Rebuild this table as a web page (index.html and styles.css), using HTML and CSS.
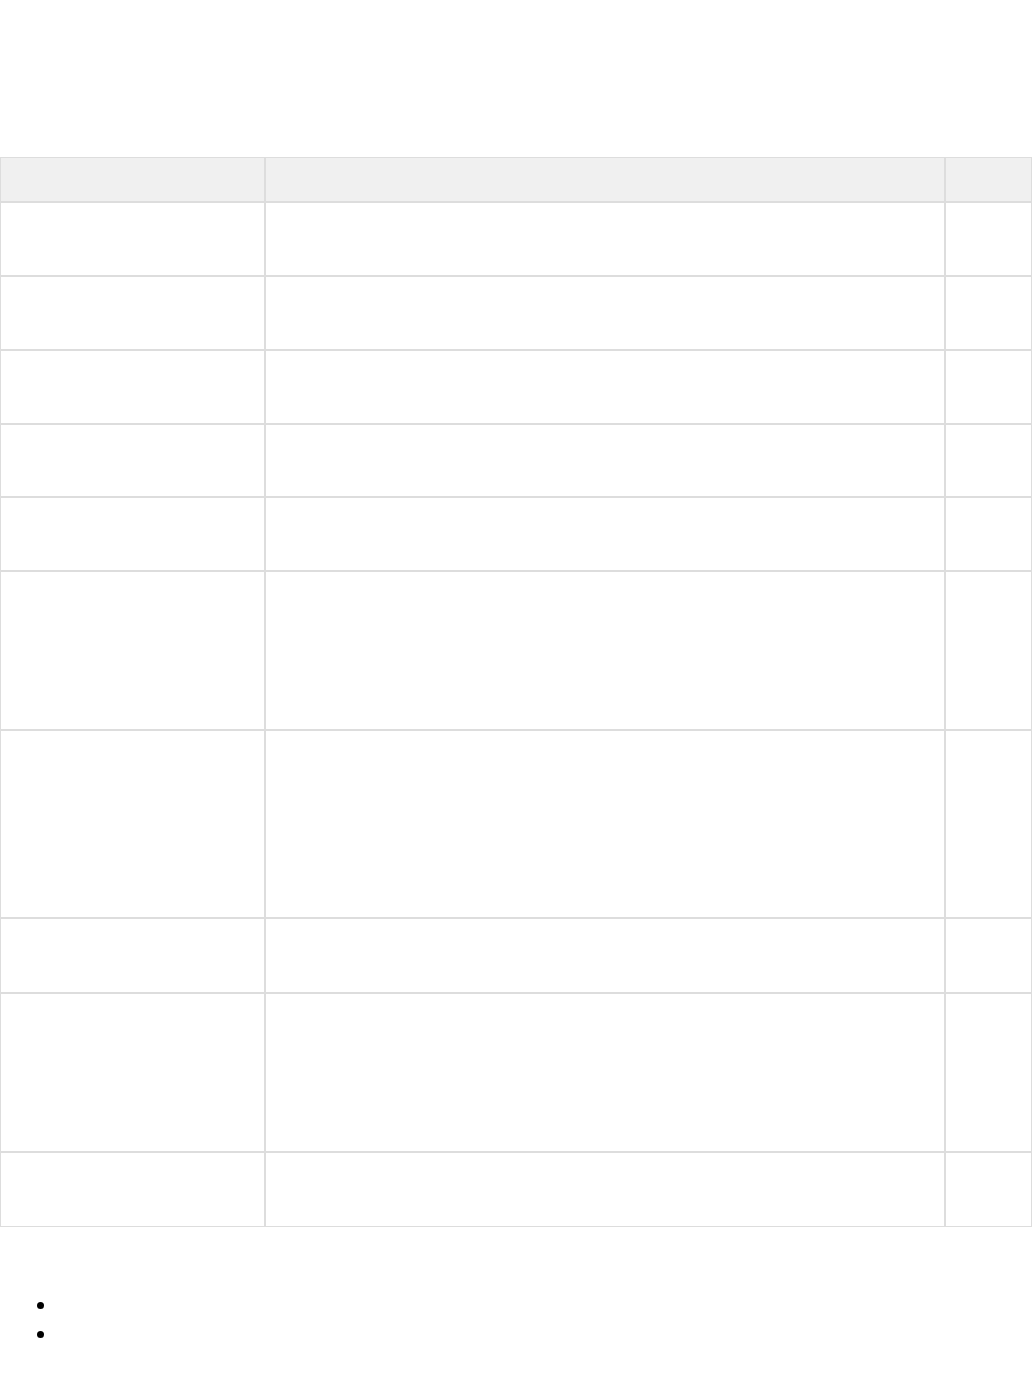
FILE: index.html
```html
<!DOCTYPE html>
<html>
<head>
<meta charset="utf-8">
<link rel="stylesheet" href="styles.css">
</head>
<body>
<div class="page">
  <table class="grid">
    <colgroup>
      <col class="c1"><col class="c2"><col class="c3">
    </colgroup>
    <thead>
      <tr class="h-head"><th></th><th></th><th></th></tr>
    </thead>
    <tbody>
      <tr class="h74"><td></td><td></td><td></td></tr>
      <tr class="h74"><td></td><td></td><td></td></tr>
      <tr class="h74"><td></td><td></td><td></td></tr>
      <tr class="h73"><td></td><td></td><td></td></tr>
      <tr class="h74"><td></td><td></td><td></td></tr>
      <tr class="h159"><td></td><td></td><td></td></tr>
      <tr class="h188"><td></td><td></td><td></td></tr>
      <tr class="h75"><td></td><td></td><td></td></tr>
      <tr class="h159"><td></td><td></td><td></td></tr>
      <tr class="h75"><td></td><td></td><td></td></tr>
    </tbody>
  </table>
  <ul class="notes">
    <li>&nbsp;</li>
    <li>&nbsp;</li>
  </ul>
</div>
</body>
</html>
```

FILE: styles.css
```css
html, body {
  margin: 0;
  padding: 0;
  background: #ffffff;
}
body {
  font-family: "Open Sans", "Liberation Sans", Arial, sans-serif;
  font-size: 18px;
  color: #000;
}
.page {
  padding-top: 157px;
}
.grid {
  width: 1032px;
  border-collapse: separate;
  border-spacing: 0;
  table-layout: fixed;
}
.c1 { width: 265px; }
.c2 { width: 680px; }
.c3 { width: 87px; }
.grid th,
.grid td {
  border: 1px solid #dddddd;
  padding: 0;
}
.grid th {
  background: #f0f0f0;
}
.h-head { height: 45px; }
.h73 { height: 73px; }
.h74 { height: 74px; }
.h75 { height: 75px; }
.h159 { height: 159px; }
.h188 { height: 188px; }
.notes {
  margin: 64px 0 0 0;
  padding-left: 58px;
  font-size: 20px;
  line-height: 29px;
}
```
